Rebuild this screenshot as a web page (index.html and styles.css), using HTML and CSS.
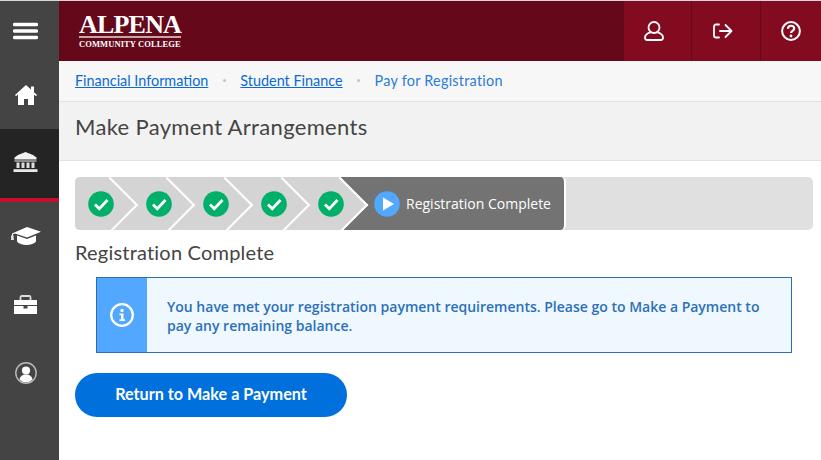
FILE: index.html
```html
<!DOCTYPE html>
<html lang="en">
<head>
    <meta charset="UTF-8">
    <title>Make Payment Arrangements</title>
    <link rel="stylesheet" href="styles.css">
</head>
<body>
    <nav class="sidebar">
        <div class="menu-btn">
            <svg width="25" height="18" viewBox="0 0 25 18"><path d="M1.500 2.500h22M1.500 9h22M1.500 15.500h22" stroke="#fff" stroke-width="3.400" stroke-linecap="round"/></svg>
        </div>
        <div class="nav-item home-item">
            <svg width="22" height="20" viewBox="0 0 22 20"><path d="M11 0 0 10l1 1.200 2-1.700V20h6v-6h4v6h6V9.500l2 1.700 1-1.200-3-2.700V1.500h-3v3z" fill="#fff"/></svg>
        </div>
        <div class="nav-item active">
            <svg width="25" height="20" viewBox="0 0 25 20"><path d="M12.500 0 5 3 1.500 5.500V7.500h22V5.500L20 3zM1.500 8.500h22V9.500h-22z" fill="#f2f2f2"/><path d="M3.500 10.500h3v5.500h-3zM8.500 10.500h3v5.500h-3zM13.500 10.500h3v5.500h-3zM18.500 10.500h3v5.500h-3z" fill="#ddd"/><path d="M.5 17.200h24V20H.5z" fill="#e8e8e8"/></svg>
        </div>
        <div class="nav-item cap-item">
            <svg width="30" height="18" viewBox="0 0 30 18"><path d="M16 0 30 4.800 16 10.500 4 6.500 2 7.200V9H1V6.500z" fill="#fff"/><path d="M0 8.500h2.500l.5 4.500H0z" fill="#ddd"/><path d="M6 8.500 16 12l9-3.500v6c-3 4.500-16 4.500-19 0z" fill="#fff"/></svg>
        </div>
        <div class="nav-item tool-item">
            <svg width="23" height="19" viewBox="0 0 23 19"><path d="M6.500 5V2.300A1.300 1.300 0 0 1 7.800 1h7.400a1.300 1.300 0 0 1 1.300 1.300V5" fill="none" stroke="#ddd" stroke-width="1.800"/><path d="M0 5h23v5H0z" fill="#fff"/><path d="M0 11h9.500v2.500h4V11H23v8H0z" fill="#fff"/></svg>
        </div>
        <div class="nav-item">
            <svg width="22" height="22" viewBox="0 0 22 22"><circle cx="11" cy="11" r="10.200" fill="none" stroke="#bbb" stroke-width="1.400"/><circle cx="11" cy="8.500" r="4.100" fill="#fff"/><path d="M4.500 17.500c.6-3.500 3-5 6.500-5s5.900 1.500 6.500 5a9 9 0 0 1-13 0z" fill="#fff"/></svg>
        </div>
    </nav>

    <div class="main">
        <header class="topbar">
            <div class="logo">
                <div class="logo-name">ALPENA</div>
                <div class="logo-sub">COMMUNITY COLLEGE</div>
            </div>
            <div class="top-actions">
                <div class="top-btn user-btn">
                    <svg width="20" height="20" viewBox="0 0 20 20" fill="none" stroke="#fff" stroke-width="1.800"><circle cx="10" cy="6.500" r="5.500"/><path d="M6.500 11.300C3 12.300 1 14 1 16.500 1 18 1.800 19 3.300 19h13.400c1.500 0 2.300-1 2.300-2.500 0-2.500-2-4.200-5.500-5.200"/></svg>
                </div>
                <div class="top-btn exit-btn">
                    <svg width="20" height="16" viewBox="0 0 20 16" fill="none" stroke="#fff" stroke-width="1.800" stroke-linecap="round" stroke-linejoin="round"><path d="M6 1.500H3A2 2 0 0 0 1 3.500v9a2 2 0 0 0 2 2h3M7 8h11.500M12.500 2l6 6-6 6"/></svg>
                </div>
                <div class="top-btn">
                    <svg width="20" height="20" viewBox="0 0 20 20" fill="none" stroke="#fff"><circle cx="10" cy="10" r="8.900" stroke-width="2"/><path d="M7 7.800c0-4 6.200-4 6.200-.3 0 2.300-3.200 2.300-3.200 4.500" stroke-width="2.200"/><circle cx="10" cy="15" r="1.400" fill="#fff" stroke="none"/></svg>
                </div>
            </div>
        </header>

        <div class="breadcrumbs">
            <a href="#">Financial Information</a>
            <span class="dot"></span>
            <a href="#">Student Finance</a>
            <span class="dot"></span>
            <span class="current">Pay for Registration</span>
        </div>

        <div class="title-band">
            <h1>Make Payment Arrangements</h1>
        </div>

        <div class="content">
            <div class="stepper">
                <div class="step"><svg class="check" viewBox="0 0 26 26"><circle cx="13" cy="13" r="12.800" fill="#00b06a"/><path d="m7 13.500 4.300 4.300L19.500 9" fill="none" stroke="#fff" stroke-width="2.800"/></svg></div>
                <div class="step"><svg class="check" viewBox="0 0 26 26"><circle cx="13" cy="13" r="12.800" fill="#00b06a"/><path d="m7 13.500 4.300 4.300L19.500 9" fill="none" stroke="#fff" stroke-width="2.800"/></svg></div>
                <div class="step"><svg class="check" viewBox="0 0 26 26"><circle cx="13" cy="13" r="12.800" fill="#00b06a"/><path d="m7 13.500 4.300 4.300L19.500 9" fill="none" stroke="#fff" stroke-width="2.800"/></svg></div>
                <div class="step"><svg class="check" viewBox="0 0 26 26"><circle cx="13" cy="13" r="12.800" fill="#00b06a"/><path d="m7 13.500 4.300 4.300L19.500 9" fill="none" stroke="#fff" stroke-width="2.800"/></svg></div>
                <div class="step"><svg class="check" viewBox="0 0 26 26"><circle cx="13" cy="13" r="12.800" fill="#00b06a"/><path d="m7 13.500 4.300 4.300L19.500 9" fill="none" stroke="#fff" stroke-width="2.800"/></svg></div>
                <div class="step-current">
                    <svg class="check" viewBox="0 0 26 26"><circle cx="13" cy="13" r="12.800" fill="#52a8ff"/><path d="M9 6.500v13L20 13z" fill="#fff"/></svg>
                    <span>Registration Complete</span>
                </div>
            </div>

            <h2>Registration Complete</h2>

            <div class="message">
                <div class="message-icon">
                    <svg width="24" height="24" viewBox="0 0 24 24"><circle cx="12" cy="12" r="10.800" fill="none" stroke="#fff" stroke-width="2.200"/><circle cx="12" cy="7.500" r="1.700" fill="#fff"/><path d="M9.500 10.500H13.500V16.200H15V18H9.500V16.200H11V12.300H9.500z" fill="#fff"/></svg>
                </div>
                <p>You have met your registration payment requirements. Please go to Make a Payment to pay any remaining balance.</p>
            </div>

            <button class="return-btn">Return to Make a Payment</button>
        </div>
    </div>
</body>
</html>
```

FILE: styles.css
```css
* {
    margin: 0;
    padding: 0;
    box-sizing: border-box;
}

body {
    display: flex;
    height: 460px;
    overflow: hidden;
    font-family: 'Lato', sans-serif;
    background: #fff;
    border-top: 1px solid #d8d8d8;
}

.sidebar {
    width: 59px;
    flex-shrink: 0;
    background: #444;
}

.menu-btn {
    height: 60px;
    padding-right: 8px;
    display: flex;
    align-items: center;
    justify-content: center;
}

.nav-item {
    height: 70px;
    padding-right: 8px;
    display: flex;
    align-items: center;
    justify-content: center;
}

.home-item {
    height: 68px;
}

.cap-item,
.tool-item {
    height: 68px;
}

.nav-item.active {
    height: 73px;
    padding-bottom: 3px;
    background: #242424;
    border-bottom: 4px solid #c8102e;
}

.main {
    flex: 1;
    min-width: 0;
}

.topbar {
    height: 60px;
    background: #65081a;
    display: flex;
    justify-content: space-between;
}

.logo {
    margin-left: 20px;
    padding-top: 13px;
    color: #fff;
    font-family: 'Liberation Serif', serif;
    font-weight: 700;
}

.logo-name {
    font-size: 26px;
    line-height: 22px;
    letter-spacing: -0.8px;
    border-bottom: 2px solid #c9a5ab;
}

.logo-sub {
    margin-top: 1px;
    font-size: 8.5px;
    line-height: 11px;
    letter-spacing: 0.1px;
}

.top-actions {
    display: flex;
}

.top-btn {
    width: 69px;
    background: #830b20;
    border-left: 1px solid #65081a;
    display: flex;
    align-items: center;
    justify-content: center;
}

.user-btn {
    border-left: none;
    width: 67px;
    padding-right: 7px;
}

.exit-btn {
    padding-right: 7px;
}

.top-btn:last-child {
    width: 61px;
}

.breadcrumbs {
    height: 41px;
    padding: 0 0 2px 16px;
    display: flex;
    align-items: center;
    background: #f7f7f7;
    border-bottom: 1px solid #e2e2e2;
    font-size: 14.4px;
}

.breadcrumbs a {
    color: #0a6ad6;
}

.breadcrumbs .current {
    color: #2d7cd6;
    letter-spacing: 0.25px;
}

.dot {
    width: 3px;
    height: 3px;
    margin: 0 14.500px;
    border-radius: 50%;
    background: #c4c4c4;
}

.title-band {
    height: 59px;
    padding: 11px 16px 0;
    background: #f2f2f2;
    border-bottom: 1px solid #e2e2e2;
}

h1 {
    font-size: 22px;
    font-weight: 400;
    line-height: 28px;
    letter-spacing: 0.33px;
    color: #444;
}

.content {
    padding: 16px 8px 0 16px;
}

.stepper {
    height: 53px;
    display: flex;
    overflow: hidden;
    border-radius: 5px;
    background: #e0e0e0;
}

.step {
    position: relative;
    width: 57.5px;
    padding-left: 13px;
    display: flex;
    align-items: center;
    background: #d4d4d4;
}

.step::after {
    content: '';
    position: absolute;
    top: 7.5px;
    right: 3px;
    width: 38px;
    height: 38px;
    background: #d4d4d4;
    border-top: 2px solid #fff;
    border-right: 2px solid #fff;
    transform: rotate(45deg);
    z-index: 2;
}

.check {
    position: relative;
    width: 26px;
    height: 26px;
    flex-shrink: 0;
    z-index: 3;
}

.step-current {
    position: relative;
    z-index: 1;
    width: 225px;
    margin-left: -21.5px;
    padding-left: 33px;
    display: flex;
    align-items: center;
    gap: 6px;
    background: #737373;
    border-right: 2px solid #fff;
    border-radius: 0 5px 5px 0;
    color: #fff;
    font-family: 'Open Sans', sans-serif;
    font-size: 14px;
    white-space: nowrap;
}

h2 {
    margin: 10px 0 12px;
    font-size: 20px;
    font-weight: 400;
    line-height: 25px;
    letter-spacing: 0.2px;
    color: #444;
}

.message {
    height: 76px;
    margin-left: 21px;
    width: 696px;
    display: flex;
    background: #eff7ff;
    border: 1px solid #2a6fb5;
}

.message-icon {
    width: 50px;
    flex-shrink: 0;
    display: flex;
    align-items: center;
    justify-content: center;
    background: #52a8ff;
}

.message p {
    align-self: center;
    padding: 1px 20px 0;
    font-family: 'Open Sans', sans-serif;
    font-size: 14px;
    font-weight: 600;
    line-height: 19px;
    color: #2b70b8;
}

.return-btn {
    display: block;
    width: 272px;
    height: 44px;
    margin-top: 20px;
    padding-bottom: 3px;
    border: none;
    border-radius: 22px;
    background: #0070dc;
    color: #fff;
    font-family: 'Lato', sans-serif;
    font-size: 16.2px;
    font-weight: 700;
}
```
